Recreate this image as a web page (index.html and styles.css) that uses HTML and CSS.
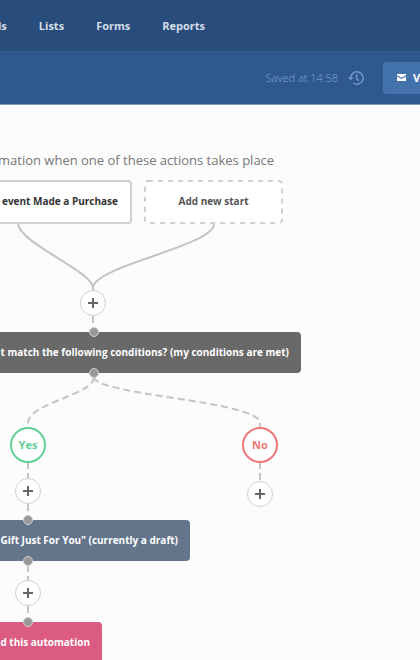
FILE: index.html
```html
<!DOCTYPE html>
<html lang="en">
  <head>
    <meta charset="UTF-8" />
    <meta name="viewport" content="width=device-width, initial-scale=1.0" />
    <title>Automation</title>
    <link rel="stylesheet" href="styles.css">
  </head>
  <body>
    <nav class="main-nav">
      <a href="#">ls</a>
      <a href="#">Lists</a>
      <a href="#">Forms</a>
      <a href="#">Reports</a>
    </nav>

    <header class="toolbar">
      <span class="saved">Saved at 14:58</span>
      <button class="history-btn" aria-label="History">
        <svg width="16" height="16" viewBox="0 0 16 16" fill="none" stroke="currentColor" stroke-width="1.5">
          <path d="M2.7 8.5V7.8A6.2 6.2 0 1 1 5.2 13" />
          <path d="M8.6 4.2V8.2L10.6 10.8" />
          <path d="M0 7.2H5.4L2.7 10.4Z" fill="currentColor" stroke="none" />
        </svg>
      </button>
      <button class="view-btn">
        <svg width="9" height="7" viewBox="0 0 9 7" fill="currentColor">
          <path d="M0 0H9V1.2L4.5 3.8L0 1.2Z" />
          <path d="M0 2.4L4.5 5L9 2.4V7H0Z" />
        </svg>
        <span>View</span>
      </button>
    </header>

    <main class="canvas">
      <h1>mation when one of these actions takes place</h1>

      <!-- connectors -->
      <svg class="edges" width="420" height="560" viewBox="0 0 420 560">
        <path d="M18 118C18 138 93 166 93 183V187" />
        <path d="M214 119C214 141 93 161 93 183" />
        <g class="dashed">
          <path d="M93 211V224" />
          <path d="M94 272C94 290 28 298 28 318V323" />
          <path d="M94 272C94 290 260 296 260 318V323" />
          <path d="M28 357V374" />
          <path d="M28 399V412" />
          <path d="M28 460V475" />
          <path d="M28 501V514" />
          <path d="M260 357V376" />
        </g>
        <rect class="slot" x="145" y="76" width="137" height="42" rx="3" />
      </svg>

      <div class="node start event">event Made a Purchase</div>
      <button class="node start add-start">Add new start</button>
      <div class="node condition">t match the following conditions? (my conditions are met)</div>
      <div class="branch yes">Yes</div>
      <div class="branch no">No</div>
      <div class="node email">Gift Just For You" (currently a draft)</div>
      <div class="node end">d this automation</div>

      <button class="plus plus-start" aria-label="Add step"></button>
      <button class="plus plus-yes" aria-label="Add step"></button>
      <button class="plus plus-no" aria-label="Add step"></button>
      <button class="plus plus-email" aria-label="Add step"></button>

      <span class="dot condition-in"></span>
      <span class="dot condition-out"></span>
      <span class="dot email-in"></span>
      <span class="dot email-out"></span>
      <span class="dot end-in"></span>
    </main>
  </body>
</html>
```

FILE: styles.css
```css
* {
  box-sizing: border-box;
}
body {
  margin: 0;
  min-height: 100vh;
  display: flex;
  flex-direction: column;
  overflow: hidden;
  font-family: "Open Sans", sans-serif;
  font-size: 11px;
  background: #fcfcfc;
}
button {
  font: inherit;
  border: none;
  padding: 0;
  cursor: pointer;
}
.main-nav {
  display: flex;
  align-items: center;
  gap: 32px;
  height: 51px;
  margin-left: -2px;
  background: #284c7b;
}
.main-nav a {
  color: #d6dee9;
  font-weight: 700;
  text-decoration: none;
}
.toolbar {
  display: flex;
  align-items: center;
  justify-content: flex-end;
  height: 54px;
  overflow: hidden;
  background: #2f598e;
  border-bottom: 1px solid #7f9abd;
}
.saved {
  color: #7fa5d4;
  font-weight: 300;
}
.history-btn {
  height: 16px;
  margin: 0 19px 0 10px;
  color: #6f97c9;
  background: none;
}
.history-btn svg {
  display: block;
}
.view-btn {
  display: flex;
  align-items: center;
  gap: 7px;
  width: 80px;
  height: 32px;
  margin-right: -43px;
  padding-left: 14px;
  border-radius: 3px;
  color: #fff;
  font-weight: 700;
  background: #4472ab;
}
.canvas {
  position: relative;
  flex: 1;
  overflow: hidden;
}
h1 {
  margin: 45px 0 0 -2px;
  color: #777;
  font-size: 13px;
  font-weight: 400;
  line-height: 20px;
  white-space: nowrap;
}
.edges {
  position: absolute;
  top: 0;
  left: 0;
  fill: none;
  stroke: #c4c4c4;
  stroke-width: 2;
}
.dashed {
  stroke-dasharray: 7 4;
}
.edges .slot {
  fill: #fff;
  stroke: #d0d0d0;
  stroke-dasharray: 5 5;
}

/* nodes */
.node {
  position: absolute;
  left: -20px;
  display: flex;
  align-items: center;
  justify-content: flex-end;
  height: 41px;
  padding: 0 12px 2px 0;
  border-radius: 4px;
  color: #fff;
  font-size: 10px;
  font-weight: 700;
  white-space: nowrap;
}
.start {
  top: 75px;
  height: 44px;
  color: #333;
  background: #fff;
}
.event {
  width: 152px;
  border: 2px solid #d0d0d0;
}
.add-start {
  left: 144px;
  width: 139px;
  justify-content: center;
  padding: 0 0 2px;
  color: #555;
  background: none;
}
.condition {
  top: 227px;
  width: 321px;
  background: #696969;
}
.email {
  top: 415px;
  width: 210px;
  background: #64748a;
}
.end {
  top: 517px;
  width: 122px;
  background: #dc5b83;
}
.branch {
  position: absolute;
  top: 322px;
  display: flex;
  align-items: center;
  justify-content: center;
  width: 36px;
  height: 36px;
  padding-bottom: 1px;
  border: 2px solid;
  border-radius: 50%;
  font-weight: 700;
  background: #fff;
}
.yes {
  left: 10px;
  color: #62cf97;
}
.no {
  left: 242px;
  color: #ec7676;
}
.plus {
  position: absolute;
  width: 26px;
  height: 26px;
  border: 1px solid #d0d0d0;
  border-radius: 50%;
  background:
    linear-gradient(#666, #666) center / 10px 2px no-repeat,
    linear-gradient(#666, #666) center / 2px 10px no-repeat,
    #fff;
}
.plus-start {
  top: 185px;
  left: 80px;
}
.plus-yes {
  top: 373px;
  left: 15px;
}
.plus-no {
  top: 376px;
  left: 247px;
}
.plus-email {
  top: 475px;
  left: 15px;
}
.dot {
  position: absolute;
  left: 23px;
  width: 10px;
  height: 10px;
  border: 1px solid #d0d0d0;
  border-radius: 50%;
  background: #999;
}
.condition-in {
  top: 222px;
  left: 89px;
}
.condition-out {
  top: 263px;
  left: 89px;
}
.email-in {
  top: 410px;
}
.email-out {
  top: 451px;
}
.end-in {
  top: 512px;
}
```
